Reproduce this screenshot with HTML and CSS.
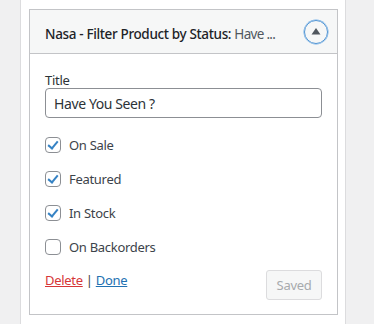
FILE: index.html
```html
<!DOCTYPE html>
<html lang="en">
<head>
    <meta charset="UTF-8">
    <title>Widget</title>
    <link rel="stylesheet" href="styles.css">
</head>
<body>
    <div class="sidebar">
        <div class="widget">
            <div class="widget-top">
                <h3 class="widget-title">Nasa - Filter Product by Status: <span class="in-title">Have ...</span></h3>
                <button class="toggle" aria-label="Collapse">
                    <svg width="10" height="8" viewBox="0 0 10 8"><path d="M5 1 L9.5 7.5 L0.5 7.5 Z" fill="#50575e"/></svg>
                </button>
            </div>
            <div class="widget-inside">
                <label class="field-label" for="title">Title</label>
                <input type="text" id="title" class="text-input" value="Have You Seen ?">

                <label class="check"><span class="box checked"></span>On Sale</label>
                <label class="check"><span class="box checked"></span>Featured</label>
                <label class="check"><span class="box checked"></span>In Stock</label>
                <label class="check"><span class="box"></span>On Backorders</label>

                <div class="widget-actions">
                    <div class="links">
                        <a href="#" class="delete">Delete</a> | <a href="#" class="done">Done</a>
                    </div>
                    <button class="saved" disabled>Saved</button>
                </div>
            </div>
        </div>
    </div>
</body>
</html>
```

FILE: styles.css
```css
body {
    margin: 0;
    background-color: #f0f0f1;
    font-family: "Noto Sans", "Open Sans", sans-serif;
    font-size: 13px;
    letter-spacing: -0.3px;
    color: #3c434a;
}
.sidebar {
    margin-left: 20px;
    width: 326px;
    height: 324px;
    background: white;
    border-left: 1px solid #dcdcde;
    border-right: 1px solid #dcdcde;
    padding: 9px 0 0 8px;
    box-sizing: border-box;
}
.widget {
    width: 309px;
    border: 1px solid #c3c4c7;
    box-sizing: border-box;
    background: white;
}
.widget-top {
    height: 43px;
    background: #f6f7f7;
    border-bottom: 1px solid #c3c4c7;
    display: flex;
    align-items: center;
    justify-content: space-between;
    padding: 0 9px 0 15px;
}
.widget-title {
    margin: 4px 0 0;
    font-size: 13.5px;
    font-weight: 500;
    letter-spacing: -0.35px;
    color: #1d2327;
    white-space: nowrap;
}
.in-title {
    font-weight: 400;
    letter-spacing: -0.7px;
    color: #50575e;
}
.toggle {
    width: 24px;
    height: 24px;
    border-radius: 50%;
    border: 1.5px solid #4f94d4;
    background: transparent;
    padding: 0;
    display: flex;
    align-items: center;
    justify-content: center;
    box-shadow: 0 0 0 0.5px #72aee6;
}
.toggle svg {
    margin-top: -1px;
}
.widget-inside {
    padding: 18px 15px 14px;
}
.field-label {
    display: block;
    color: #2c3338;
    line-height: 16px;
}
.text-input {
    display: block;
    width: 100%;
    box-sizing: border-box;
    height: 30px;
    margin: 0 0 10px;
    padding: 0 8px;
    border: 1px solid #8c8f94;
    border-radius: 4px;
    font-family: inherit;
    font-size: 14px;
    letter-spacing: -0.4px;
    color: #2c3338;
}
.check {
    display: flex;
    align-items: center;
    height: 34px;
    color: #3c434a;
}
.box {
    width: 16px;
    height: 16px;
    border: 1px solid #8c8f94;
    border-radius: 4px;
    box-sizing: border-box;
    margin-right: 8px;
    position: relative;
}
.box.checked::after {
    content: "";
    position: absolute;
    left: 4px;
    top: 1px;
    width: 4px;
    height: 8px;
    border: solid #3582c4;
    border-width: 0 2.5px 2.5px 0;
    transform: rotate(40deg);
}
.widget-actions {
    display: flex;
    justify-content: space-between;
    align-items: flex-start;
    margin-top: 6px;
}
.links {
    margin-top: 1px;
    color: #3c434a;
}
.delete {
    color: #d63638;
}
.done {
    color: #2271b1;
}
.saved {
    width: 56px;
    height: 30px;
    font-family: inherit;
    font-size: 13px;
    letter-spacing: -0.3px;
    color: #a7aaad;
    background: #f6f7f7;
    border: 1px solid #dcdcde;
    border-radius: 3px;
}
```
